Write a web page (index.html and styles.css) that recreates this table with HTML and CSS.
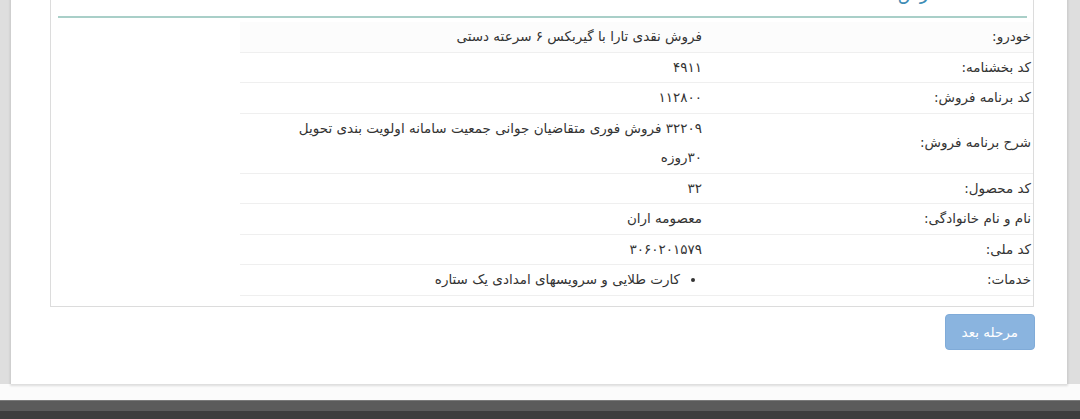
FILE: index.html
```html
<!DOCTYPE html>
<html lang="fa" dir="rtl">
<head>
<meta charset="utf-8">
<title>اطلاعات سفارش</title>
<link rel="stylesheet" href="styles.css">
</head>
<body>
<div class="shell">
  <div class="card">
    <div class="panel">
      <h3 class="legend">اطلاعات سفارش</h3>
      <table class="info">
        <tbody>
          <tr class="first"><td class="label">خودرو:</td><td class="value">فروش نقدی تارا با گیربکس ۶ سرعته دستی</td></tr>
          <tr><td class="label">کد بخشنامه:</td><td class="value">۴۹۱۱</td></tr>
          <tr><td class="label">کد برنامه فروش:</td><td class="value">۱۱۲۸۰۰</td></tr>
          <tr><td class="label">شرح برنامه فروش:</td><td class="value">۳۲۲۰۹ فروش فوری متقاضیان جوانی جمعیت سامانه اولویت بندی تحویل ۳۰روزه</td></tr>
          <tr><td class="label">کد محصول:</td><td class="value">۳۲</td></tr>
          <tr><td class="label">نام و نام خانوادگی:</td><td class="value">معصومه اران</td></tr>
          <tr><td class="label">کد ملی:</td><td class="value">۳۰۶۰۲۰۱۵۷۹</td></tr>
          <tr><td class="label">خدمات:</td><td class="value"><ul class="services"><li>کارت طلایی و سرویسهای امدادی یک ستاره</li></ul></td></tr>
        </tbody>
      </table>
    </div>
    <div class="actions">
      <button class="btn-next" type="button" disabled>مرحله بعد</button>
    </div>
  </div>
</div>
<footer class="footer"><div class="footer-band"></div></footer>
</body>
</html>
```

FILE: styles.css
```css
html, body {
  margin: 0;
  padding: 0;
}
body {
  background: #fbfbfb;
  font-family: "DejaVu Sans", "Noto Sans", sans-serif;
  font-size: 13.5px;
  color: #333;
  overflow: hidden;
}
.shell {
  margin-top: -41px;
  background: #dedede;
  padding: 0 12px 0 10px;
}
.card {
  background: #fff;
  border-left: 1px solid #cfcfcf;
  border-right: 1px solid #cfcfcf;
  box-shadow: 0 2px 2px rgba(0, 0, 0, 0.12);
  padding: 10px 33px 34px 39px;
}
.panel {
  border: 1px solid #dcdcdc;
  padding: 12px 0 10px 0;
}
.legend {
  margin: 0 6px 4px 7px;
  font-size: 18px;
  font-weight: normal;
  line-height: 24px;
  padding-bottom: 10px;
  color: #3f8db5;
  border-bottom: 2px solid #a9cfc8;
}
.info {
  width: 793px;
  border-collapse: collapse;
  margin-right: 0;
  margin-left: auto;
}
.info tr {
  border-bottom: 1px solid #efefef;
}
.info tr.first {
  background: #fcfcfc;
}
.info td {
  padding: 0;
  line-height: 29.5px;
  vertical-align: middle;
}
.info .label {
  width: 316px;
  padding-right: 2px;
}
.info .value {
  padding-right: 13px;
  padding-left: 30px;
}
.services {
  margin: 0;
  padding: 0 22px 0 0;
}
.actions {
  display: flex;
  justify-content: flex-start;
  margin-top: 7px;
}
.btn-next {
  font-family: "DejaVu Sans", sans-serif;
  font-size: 13.5px;
  line-height: 24px;
  padding: 5px 16px;
  margin-right: -1px;
  color: #fff;
  background: #8ab4df;
  border: 1px solid #80abd8;
  border-radius: 4px;
}
.footer {
  margin-top: 16px;
  background: #3d3d3d;
  height: 18px;
  border-top: 1px solid #7a7a7a;
}
.footer-band {
  height: 10px;
  background: #5b5b5b;
}
```
